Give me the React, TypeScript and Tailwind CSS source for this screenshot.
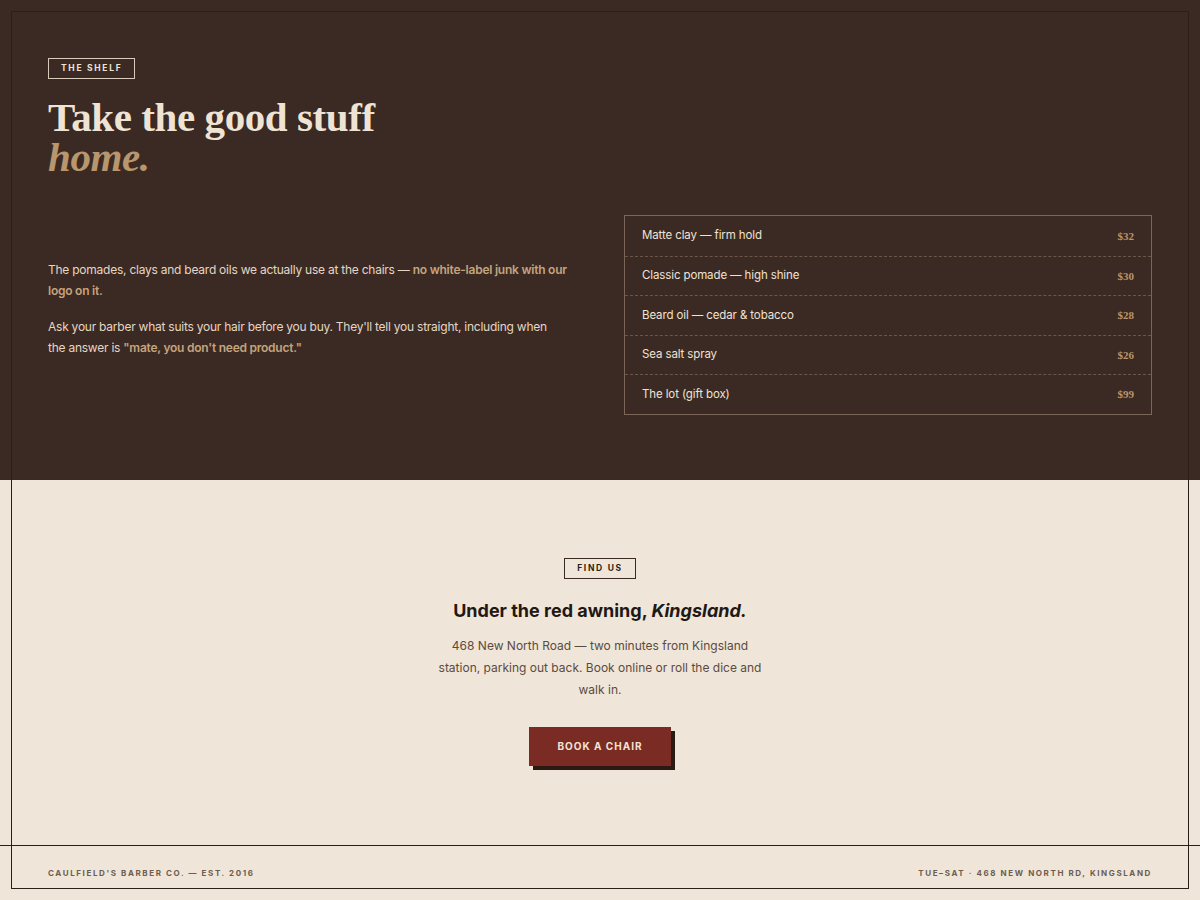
import React from "react";

const sans = "font-['Inter','Liberation_Sans',sans-serif]";
const serif = "font-['Liberation_Serif','DejaVu_Serif',serif]";

const products = [
  { name: "Matte clay — firm hold", price: "$32" },
  { name: "Classic pomade — high shine", price: "$30" },
  { name: "Beard oil — cedar & tobacco", price: "$28" },
  { name: "Sea salt spray", price: "$26" },
  { name: "The lot (gift box)", price: "$99" },
];

const Tag = ({ children, light }: { children: React.ReactNode; light?: boolean }) => (
  <span
    className={`flex h-[21px] w-fit items-center border px-[12px] text-[8.5px] font-bold uppercase tracking-[0.2em] ${
      light
        ? "border-[#d9cbbb] text-[#efe3d3]"
        : "border-[#3b2a23] text-[#2b1f19]"
    }`}
  >
    {children}
  </span>
);

const App = () => {
  return (
    <div className={`${sans} min-h-[900px] bg-[#efe6d9]`}>
      {/* frame drawn over the whole page */}
      <div className="pointer-events-none fixed inset-[11px] z-10 border-[1.5px] border-[#2b1f19]" />

      <section className="h-[480px] bg-[#3b2a23]">
        <div className="mx-auto max-w-[1104px] pt-[58px]">
          <Tag light>The shelf</Tag>
          <h2 className={`${serif} mt-[18px] text-[41px] font-bold leading-[40px] tracking-[-0.01em] text-[#efe3d3]`}>
            Take the good stuff
            <br />
            <em className="text-[#b8966e]">home.</em>
          </h2>

          <div className="mt-[38px] grid grid-cols-2 items-center gap-12">
            <div className="pb-[12px] text-[12px] leading-[21px] tracking-[-0.02em] text-[#e4d6c5]">
              <p>
                The pomades, clays and beard oils we actually use at the chairs —{" "}
                <strong className="font-semibold text-[#c4a47e]">
                  no white-label junk with our logo on it.
                </strong>
              </p>
              <p className="mt-[15px] pr-[12px]">
                Ask your barber what suits your hair before you buy. They'll tell you
                straight, including when the answer is{" "}
                <strong className="font-semibold text-[#c4a47e]">
                  "mate, you don't need product."
                </strong>
              </p>
            </div>

            <ul className="border border-[#7a6558]">
              {products.map((p, i) => (
                <li
                  key={p.name}
                  className={`flex h-[39.6px] items-center justify-between px-[17px] ${
                    i > 0 ? "border-t border-dashed border-[#6b5649]" : ""
                  }`}
                >
                  <span className="text-[11.5px] tracking-[-0.01em] text-[#efe3d3]">{p.name}</span>
                  <span className={`${serif} text-[11px] font-bold text-[#b8966e]`}>
                    {p.price}
                  </span>
                </li>
              ))}
            </ul>
          </div>
        </div>
      </section>

      <section className="flex h-[365px] flex-col items-center pt-[78px] text-center">
        <Tag>Find us</Tag>
        <h3 className="mt-[20px] text-[18px] font-bold leading-[24px] text-[#221813]">
          Under the red awning, <em>Kingsland.</em>
        </h3>
        <p className="mt-[12px] max-w-[340px] text-[12px] leading-[22px] text-[#5c4a3f]">
          468 New North Road — two minutes from Kingsland station, parking out back.
          Book online or roll the dice and walk in.
        </p>
        <button className="mt-[26px] h-[39px] w-[142px] bg-[#7a2b24] text-[10px] font-bold uppercase tracking-[0.1em] text-[#f3e4d4] shadow-[4px_4px_0_#2b1a14]">
          Book a chair
        </button>
      </section>

      <footer className="h-[55px] border-t-[1.5px] border-[#2b1f19]">
        <div className="mx-auto flex h-full max-w-[1104px] items-center justify-between text-[8px] font-bold uppercase tracking-[0.2em] text-[#6e5c50]">
          <span>Caulfield's Barber Co. — Est. 2016</span>
          <span>Tue–Sat · 468 New North Rd, Kingsland</span>
        </div>
      </footer>
    </div>
  );
};

export default App;
